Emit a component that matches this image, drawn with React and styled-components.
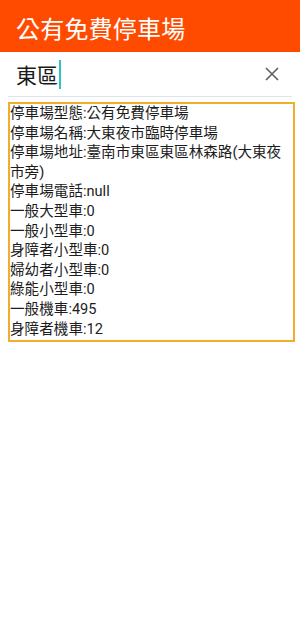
import React from "react";
import styled, { createGlobalStyle } from "styled-components";

const GlobalStyle = createGlobalStyle`
	html, body {
		margin: 0;
		padding: 0;
		background: #ffffff;
	}
	body {
		font-family: Roboto, "Noto Sans CJK TC", sans-serif;
	}
`;

const lines = [
	"停車場型態:公有免費停車場",
	"停車場名稱:大東夜市臨時停車場",
	"停車場地址:臺南市東區東區林森路(大東夜市旁)",
	"停車場電話:null",
	"一般大型車:0",
	"一般小型車:0",
	"身障者小型車:0",
	"婦幼者小型車:0",
	"綠能小型車:0",
	"一般機車:495",
	"身障者機車:12",
];

const App = () => {
	return (
		<Page>
			<GlobalStyle />
			<TopBar>公有免費停車場</TopBar>
			<SearchRow>
				<Query>
					東區
					<Caret />
				</Query>
				<ClearButton aria-label="clear">
					<svg width="14" height="14" viewBox="0 0 14 14">
						<path d="M1 1L13 13M13 1L1 13" stroke="#5f5f5f" strokeWidth="1.6" />
					</svg>
				</ClearButton>
			</SearchRow>
			<ResultBox>
				{lines.map((line) => (
					<Line key={line}>{line}</Line>
				))}
			</ResultBox>
		</Page>
	);
};

export default App;

const Page = styled.div`
	width: 300px;
	min-height: 632px;
	background: #ffffff;
`;

const TopBar = styled.div`
	height: 52px;
	background: #ff4b00;
	color: #ffffff;
	font-size: 24px;
	display: flex;
	align-items: center;
	padding: 2px 16px 0;
	box-sizing: border-box;
	letter-spacing: 0.2px;
`;

const SearchRow = styled.div`
	height: 45px;
	margin: 0 8px;
	border-bottom: 1px solid #dde3ea;
	display: flex;
	align-items: center;
	justify-content: space-between;
	padding: 0 10px 0 8px;
	box-sizing: border-box;
`;

const Query = styled.div`
	font-size: 21px;
	color: #1a1a1a;
	display: flex;
	align-items: center;
`;

const Caret = styled.span`
	display: inline-block;
	width: 2px;
	height: 29px;
	background: #2ec4c4;
	margin-left: 1px;
`;

const ClearButton = styled.div`
	width: 20px;
	height: 20px;
	display: flex;
	align-items: center;
	justify-content: center;
`;

const ResultBox = styled.div`
	margin: 5px 5px 0 8px;
	border: 2px solid #f3ad2e;
	padding: 0 4px 1px 0;
	box-sizing: border-box;
`;

const Line = styled.div`
	font-size: 14.6px;
	line-height: 19.6px;
	color: #1c1c1c;
	word-break: break-all;
`;
